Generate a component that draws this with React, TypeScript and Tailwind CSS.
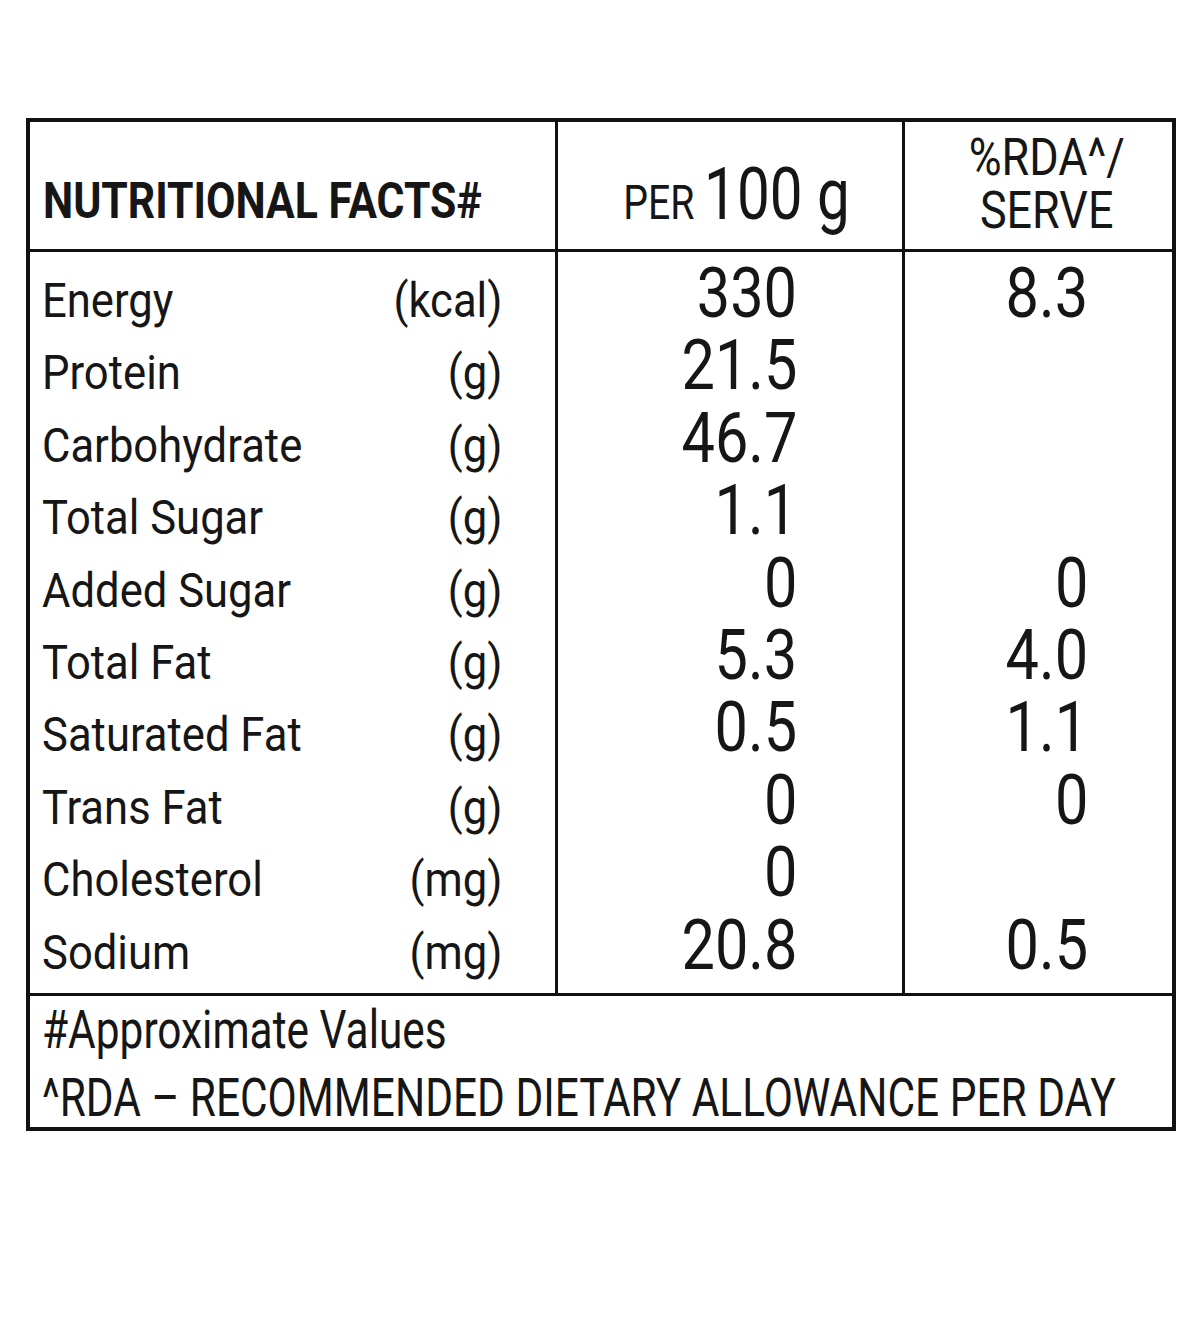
const rows = [
  { name: 'Energy', unit: '(kcal)', per100: '330', rda: '8.3' },
  { name: 'Protein', unit: '(g)', per100: '21.5', rda: '' },
  { name: 'Carbohydrate', unit: '(g)', per100: '46.7', rda: '' },
  { name: 'Total Sugar', unit: '(g)', per100: '1.1', rda: '' },
  { name: 'Added Sugar', unit: '(g)', per100: '0', rda: '0' },
  { name: 'Total Fat', unit: '(g)', per100: '5.3', rda: '4.0' },
  { name: 'Saturated Fat', unit: '(g)', per100: '0.5', rda: '1.1' },
  { name: 'Trans Fat', unit: '(g)', per100: '0', rda: '0' },
  { name: 'Cholesterol', unit: '(mg)', per100: '0', rda: '' },
  { name: 'Sodium', unit: '(mg)', per100: '20.8', rda: '0.5' }
]

// condensed look: the label face is narrower than any installed font
function Squeeze({ children, className }: { children: React.ReactNode; className: string }) {
  return <span className={`inline-block whitespace-nowrap ${className}`}>{children}</span>
}

export default function App() {
  return (
    <div className="min-h-[1340px] bg-white pt-[118px] pl-[26px] text-[#161616] font-['Roboto','Liberation_Sans',sans-serif]">
      <div className="w-[1150px] border-4 border-[#111]">
        {/* header */}
        <div className="flex h-[130px] border-b-[3px] border-[#111]">
          <div className="w-[528px] border-r-[3px] border-[#111] flex items-end pl-[13px] pb-[23px]">
            <Squeeze className="origin-left scale-x-[0.855] text-[50px] font-bold leading-none">
              NUTRITIONAL FACTS#
            </Squeeze>
          </div>
          <div className="w-[347px] border-r-[3px] border-[#111] flex items-end justify-center pl-[14px] pb-[18px]">
            <div className="flex items-baseline gap-[12px] scale-x-[0.8] whitespace-nowrap">
              <span className="text-[49px] leading-none">PER</span>
              <span className="text-[73px] leading-none">100 g</span>
            </div>
          </div>
          <div className="flex-1 flex justify-center pl-[16px] pt-[9px]">
            <div className="flex flex-col items-center scale-x-[0.88] text-[51px] leading-[53px] whitespace-nowrap">
              <span>%RDA^/</span>
              <span>SERVE</span>
            </div>
          </div>
        </div>

        {/* body */}
        <div className="flex h-[741px]">
          <div className="w-[528px] border-r-[3px] border-[#111] pl-[12px] pr-[53px] pt-[13px] text-[49px] leading-[72.4px]">
            {rows.map((r) => (
              <div key={r.name} className="flex justify-between h-[72.4px]">
                <Squeeze className="origin-left scale-x-[0.89]">{r.name}</Squeeze>
                <Squeeze className="origin-right scale-x-[0.89]">{r.unit}</Squeeze>
              </div>
            ))}
          </div>
          <div className="w-[347px] border-r-[3px] border-[#111] pr-[105px] pt-[5px] text-right text-[70px] leading-[72.4px]">
            {rows.map((r) => (
              <div key={r.name} className="h-[72.4px]">
                <Squeeze className="origin-right scale-x-[0.85]">{r.per100}</Squeeze>
              </div>
            ))}
          </div>
          <div className="flex-1 pr-[84px] pt-[5px] text-right text-[70px] leading-[72.4px]">
            {rows.map((r) => (
              <div key={r.name} className="h-[72.4px]">
                <Squeeze className="origin-right scale-x-[0.85]">{r.rda}</Squeeze>
              </div>
            ))}
          </div>
        </div>

        {/* footer */}
        <div className="h-[134px] border-t-[3px] border-[#111] pl-[12px] text-[53px] leading-[68px]">
          <div className="origin-left scale-x-[0.8] whitespace-nowrap">
            <p>#Approximate Values</p>
            <p>^RDA – RECOMMENDED DIETARY ALLOWANCE PER DAY</p>
          </div>
        </div>
      </div>
    </div>
  )
}
